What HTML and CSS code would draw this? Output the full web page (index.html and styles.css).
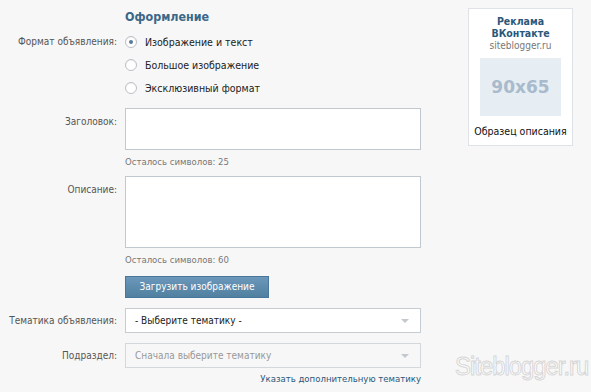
FILE: index.html
```html
<!DOCTYPE html>
<html lang="ru">
<head>
<meta charset="utf-8">
<title>Оформление</title>
<link rel="stylesheet" href="styles.css">
</head>
<body>
<div class="page">
  <div class="form">
    <div class="row heading-row">
      <div></div>
      <h2 class="heading">Оформление</h2>
    </div>
    <div class="row format-row">
      <div class="label">Формат объявления:</div>
      <div class="radios">
        <div class="radio"><span class="dot checked"></span><span>Изображение и текст</span></div>
        <div class="radio"><span class="dot"></span><span>Большое изображение</span></div>
        <div class="radio"><span class="dot"></span><span>Эксклюзивный формат</span></div>
      </div>
    </div>
    <div class="row title-row">
      <div class="label label-field">Заголовок:</div>
      <div>
        <div class="input title-input"></div>
        <div class="counter">Осталось символов: 25</div>
      </div>
    </div>
    <div class="row desc-row">
      <div class="label label-field">Описание:</div>
      <div>
        <div class="input desc-input"></div>
        <div class="counter">Осталось символов: 60</div>
      </div>
    </div>
    <div class="row button-row">
      <div></div>
      <div><button class="upload">Загрузить изображение</button></div>
    </div>
    <div class="row select-row">
      <div class="label label-select">Тематика объявления:</div>
      <div class="select"><span>- Выберите тематику -</span><span class="arrow"></span></div>
    </div>
    <div class="row select-row second">
      <div class="label label-select">Подраздел:</div>
      <div class="select disabled"><span>Сначала выберите тематику</span><span class="arrow"></span></div>
    </div>
    <div class="row link-row">
      <div></div>
      <div class="more"><a href="#">Указать дополнительную тематику</a></div>
    </div>
  </div>
  <div class="ad">
    <div class="ad-title">Реклама<br>ВКонтакте</div>
    <div class="ad-domain">siteblogger.ru</div>
    <div class="ad-img">90x65</div>
    <div class="ad-desc">Образец описания</div>
  </div>
</div>
<div class="watermark">Siteblogger.ru</div>
</body>
</html>
```

FILE: styles.css
```css
html, body {
  margin: 0;
  padding: 0;
}
body {
  background: #f7f7f7;
  width: 591px;
  height: 392px;
  overflow: hidden;
  position: relative;
  font-family: "DejaVu Sans Condensed", "DejaVu Sans", sans-serif;
  font-stretch: condensed;
  font-size: 10.5px;
  color: #222;
}
.page {
  display: flex;
  align-items: flex-start;
  padding-top: 8px;
}
.form {
  width: 421px;
}
.row {
  display: grid;
  grid-template-columns: 117px 296px;
  column-gap: 8px;
}
.label {
  text-align: right;
  color: #555;
  font-size: 10px;
  line-height: 14px;
  white-space: nowrap;
}
.heading {
  margin: 0;
  height: 18px;
  line-height: 18px;
  font-size: 12.4px;
  font-weight: bold;
  color: #3b6789;
  font-stretch: normal;
}
.format-row {
  margin-top: 4px;
}
.format-row .label {
  line-height: 23px;
}
.radio {
  display: flex;
  align-items: center;
  height: 23px;
  gap: 8px;
  color: #222;
}
.dot {
  width: 10px;
  height: 10px;
  border: 1px solid #b9bfc6;
  border-radius: 50%;
  background: #fff;
  position: relative;
  box-shadow: inset 0 1px 1px rgba(0,0,0,0.06);
}
.dot.checked::after {
  content: "";
  position: absolute;
  left: 3px;
  top: 3px;
  width: 4px;
  height: 4px;
  border-radius: 50%;
  background: #5a7a9a;
}
.title-row {
  margin-top: 9px;
}
.label-field {
  padding-top: 7px;
}
.input {
  background: #fff;
  border: 1px solid #c0c8d0;
  box-sizing: border-box;
}
.title-input {
  height: 42px;
}
.desc-input {
  height: 72px;
}
.counter {
  margin-top: 5px;
  line-height: 14px;
  font-size: 9.5px;
  color: #777;
}
.desc-row {
  margin-top: 7px;
}
.button-row {
  margin-top: 9px;
}
.upload {
  display: block;
  width: 144px;
  height: 22px;
  margin: 0;
  padding: 0;
  border: 1px solid #4a769b;
  background: linear-gradient(#6b97bb, #50809f);
  color: #fff;
  font-family: inherit;
  font-stretch: condensed;
  font-size: 10px;
  line-height: 20px;
}
.select-row {
  margin-top: 10px;
}
.label-select {
  line-height: 25px;
}
.select {
  height: 25px;
  box-sizing: border-box;
  border: 1px solid #c4ccd4;
  background: #fff;
  display: flex;
  align-items: center;
  justify-content: space-between;
  padding: 0 11px 0 9px;
  font-size: 10px;
  color: #222;
}
.select.disabled {
  background: #f7f7f7;
  border-color: #d3d8dd;
  color: #999;
}
.arrow {
  width: 0;
  height: 0;
  border-left: 4px solid transparent;
  border-right: 4px solid transparent;
  border-top: 4px solid #c3c9cf;
}
.link-row {
  margin-top: 4px;
}
.more {
  text-align: right;
  line-height: 14px;
  font-size: 9.5px;
}
.more a {
  color: #2b587a;
  text-decoration: none;
}
.ad {
  margin-left: 47px;
  width: 105px;
  height: 138px;
  box-sizing: border-box;
  border: 1px solid #dfe3e8;
  background: #fff;
  display: flex;
  flex-direction: column;
  align-items: center;
  padding-top: 6px;
}
.ad-title {
  font-weight: bold;
  color: #2b587a;
  text-align: center;
  line-height: 12px;
}
.ad-domain {
  color: #777;
  line-height: 14px;
  font-size: 10px;
}
.ad-img {
  margin-top: 5px;
  width: 81px;
  height: 58px;
  background: #e6edf3;
  color: #a8bacb;
  font-family: "DejaVu Sans", sans-serif;
  font-stretch: normal;
  font-weight: bold;
  font-size: 17px;
  display: flex;
  align-items: center;
  justify-content: center;
}
.ad-desc {
  margin-top: 8px;
  line-height: 14px;
  color: #111;
}
.watermark {
  position: absolute;
  right: 3px;
  top: 352px;
  font-family: "Liberation Sans", sans-serif;
  font-size: 25px;
  color: #fff;
  -webkit-text-stroke: 1px #d6d6d6;
  letter-spacing: -1px;
  transform: scaleX(0.95);
  transform-origin: right center;
}
```
